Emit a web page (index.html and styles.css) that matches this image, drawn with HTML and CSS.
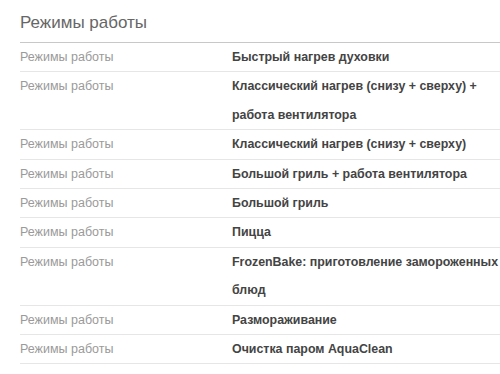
FILE: index.html
```html
<!DOCTYPE html>
<html lang="ru">
<head>
<meta charset="utf-8">
<link rel="stylesheet" href="styles.css">
</head>
<body>
<div class="spec">
  <h2 class="spec-title">Режимы работы</h2>
  <table class="spec-table">
    <tr><td class="k">Режимы работы</td><td class="v">Быстрый нагрев духовки</td></tr>
    <tr><td class="k">Режимы работы</td><td class="v">Классический нагрев (снизу + сверху) + работа вентилятора</td></tr>
    <tr><td class="k">Режимы работы</td><td class="v">Классический нагрев (снизу + сверху)</td></tr>
    <tr><td class="k">Режимы работы</td><td class="v">Большой гриль + работа вентилятора</td></tr>
    <tr><td class="k">Режимы работы</td><td class="v">Большой гриль</td></tr>
    <tr><td class="k">Режимы работы</td><td class="v">Пицца</td></tr>
    <tr><td class="k">Режимы работы</td><td class="v">FrozenBake: приготовление замороженных блюд</td></tr>
    <tr><td class="k">Режимы работы</td><td class="v">Размораживание</td></tr>
    <tr><td class="k">Режимы работы</td><td class="v">Очистка паром AquaClean</td></tr>
  </table>
</div>
</body>
</html>
```
FILE: styles.css
```css
html, body {
  margin: 0;
  padding: 0;
  background: #fff;
}
body {
  font-family: "Liberation Sans", Arial, sans-serif;
  overflow: hidden;
}
.spec {
  padding: 12px 0 0 20px;
}
.spec-title {
  margin: 0 0 9px 0;
  font-size: 17px;
  line-height: 21px;
  font-weight: normal;
  color: #666;
}
.spec-table {
  width: 480px;
  border-collapse: collapse;
  border-top: 1px solid #c8c8c8;
  font-size: 12.5px;
  line-height: 28.4px;
}
.spec-table td {
  padding: 0;
  vertical-align: top;
  border-bottom: 1px solid #e6e6e6;
}
.spec-table .k {
  width: 212px;
  color: #9a9a9a;
}
.spec-table .v {
  width: 268px;
  color: #444;
  font-weight: bold;
  font-size: 12.4px;
}
```
